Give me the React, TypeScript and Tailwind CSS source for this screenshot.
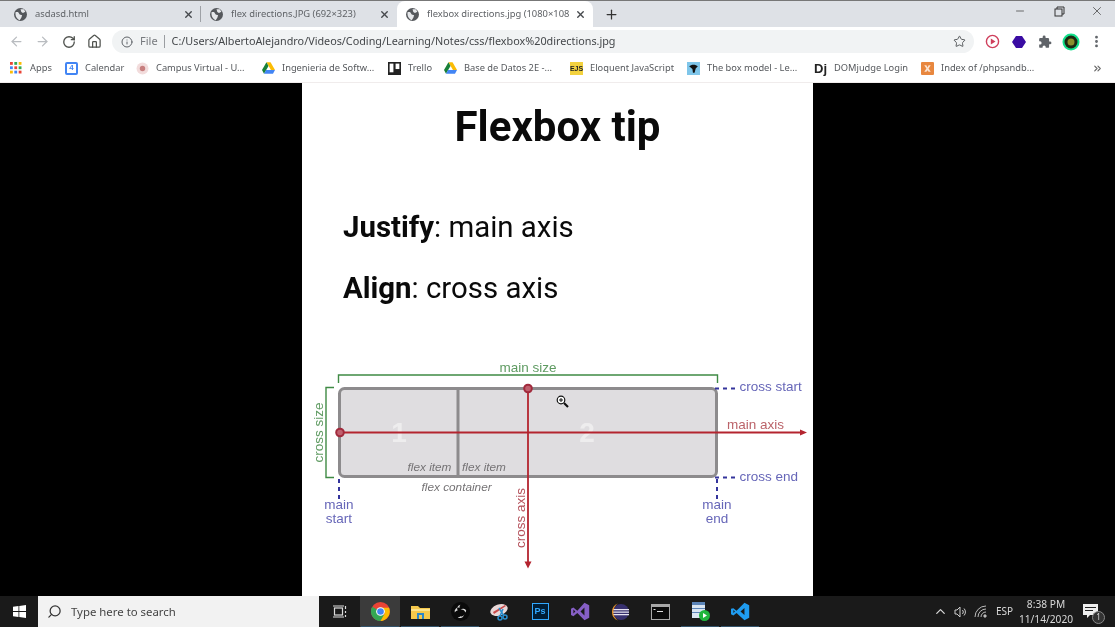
import React from "react";
import { ArrowLeft, ArrowRight, RotateCw, Home, Info, Star, X, Plus, Minus, Search, ChevronUp, MoreVertical, ChevronsRight } from "lucide-react";

const Globe = () => (
  <svg width="13" height="13" viewBox="0 0 16 16" className="shrink-0">
    <circle cx="8" cy="8" r="8" fill="#55585c" />
    <path d="M2 5l3 0 2 3 3 1-1 3-2 3C4 14 1 10 2 5zM8 1.500l4 0 2 3-3 1.500-2-1z" fill="#e6e8eb" />
  </svg>
);

const Tab = ({ title, active, sep }: { title: string; active?: boolean; sep?: boolean }) => (
  <div className={`relative flex h-[26px] w-[196px] shrink-0 items-center pl-[9px] ${active ? "rounded-t-lg bg-white" : ""}`}>
    <Globe />
    <span className="ml-[8px] whitespace-nowrap text-[9.4px] text-[#5f6266]">{title}</span>
    <X size={11} strokeWidth={3} className="ml-auto mr-[7px] text-[#45484c]" />
    {sep && <span className="absolute right-0 top-[5px] h-[16px] w-px bg-[#9ea1a6]" />}
  </div>
);

const Drive = () => (
  <svg width="13" height="12" viewBox="0 0 16 14"><path d="M5.500 0h5L16 9.500h-5z" fill="#fbbc04" /><path d="M5.500 0L0 9.500 2.500 14 8 4.500z" fill="#188038" /><path d="M2.500 14h11L16 9.500H5z" fill="#4285f4" /></svg>
);

const bookmarks: { w: string; label: string; icon: React.ReactNode }[] = [
  {
    w: "w-[55px]", label: "Apps",
    icon: (
      <svg width="13" height="13" viewBox="0 0 12 12">
        {[1, 5, 9].map((y, i) => [1, 5, 9].map((x, j) => <rect key={`${i}${j}`} x={x - 1} y={y - 1} width="2.600" height="2.600" fill={["#ea4335", "#34a853", "#fbbc04", "#4285f4", "#ea4335", "#34a853", "#fbbc04", "#4285f4", "#ea4335"][i * 3 + j]} />))}
      </svg>
    ),
  },
  { w: "w-[71px]", label: "Calendar", icon: <span className="flex h-[13px] w-[13px] items-center justify-center rounded-[2px] border-2 border-[#4285f4] bg-white font-['Liberation_Sans'] text-[8px] font-bold text-[#4285f4]">4</span> },
  { w: "w-[126px]", label: "Campus Virtual - U...", icon: <svg width="13" height="13" viewBox="0 0 12 12"><circle cx="6" cy="6" r="5.500" fill="#f2dcdc" /><circle cx="6" cy="6" r="2.500" fill="#c77e7e" /></svg> },
  { w: "w-[126px]", label: "Ingenieria de Softw...", icon: <Drive /> },
  { w: "w-[56px]", label: "Trello", icon: <svg width="13" height="13" viewBox="0 0 12 12"><rect width="12" height="12" fill="#222" /><rect x="1.500" y="1.500" width="3.500" height="8" fill="#fff" /><rect x="7" y="1.500" width="3.500" height="5" fill="#fff" /></svg> },
  { w: "w-[126px]", label: "Base de Datos 2E -...", icon: <Drive /> },
  { w: "w-[117px]", label: "Eloquent JavaScript", icon: <span className="flex h-[13px] w-[13px] items-center justify-center bg-[#f3d23e] font-['Liberation_Sans'] text-[7px] font-bold leading-none text-[#222]">EJS</span> },
  { w: "w-[127px]", label: "The box model - Le...", icon: <svg width="13" height="13" viewBox="0 0 12 12"><rect width="12" height="12" fill="#7fc6ea" /><path d="M2 4c2-2 6-2 8 0L8 6 7 10H5.500L5 6.500z" fill="#111" /></svg> },
  { w: "w-[107px]", label: "DOMjudge Login", icon: <span className="w-[15px] font-['Liberation_Sans'] text-[13px] font-bold leading-none text-[#222]">Dj</span> },
  { w: "w-[115px]", label: "Index of /phpsandb...", icon: <svg width="13" height="13" viewBox="0 0 12 12"><rect width="12" height="12" rx="1" fill="#e8873f" /><path d="M3 3h2l1 2 1-2h2L7 6l2 3H7L6 7.500 5 9H3l2-3z" fill="#fbe4d2" /></svg> },
];

const TaskBtn = ({ children, active, run }: { children: React.ReactNode; active?: boolean; run?: boolean }) => (
  <div className={`relative flex h-full w-[40px] shrink-0 items-center justify-center ${active ? "bg-[#3b3b3b]" : ""}`}>
    {children}
    {run && <span className="absolute inset-x-[1px] bottom-0 h-[1px] bg-[#33536b]" />}
  </div>
);

const Diagram = () => (
  <svg viewBox="302 355 511 241" className="block h-[241px] w-[511px] shrink-0 font-['Liberation_Sans']">
    <path d="M338.500 383v-8h379v8" fill="none" stroke="#3f8a44" strokeWidth="1.400" />
    <path d="M334 387.500h-8v90h8" fill="none" stroke="#3f8a44" strokeWidth="1.400" />
    <rect x="339.500" y="388.500" width="377" height="88" rx="5" fill="#dfdde0" stroke="#8d8b8d" strokeWidth="3" />
    <rect x="456.500" y="389" width="3" height="87" fill="#8d8b8d" />
    <text x="399" y="442" textAnchor="middle" fontSize="28" fontWeight="700" fill="#eeedee">1</text>
    <text x="587" y="442" textAnchor="middle" fontSize="28" fontWeight="700" fill="#eeedee">2</text>
    <line x1="340" y1="432.500" x2="801" y2="432.500" stroke="#b4242f" strokeWidth="1.800" />
    <path d="M800 429.500l7 3-7 3z" fill="#b4242f" />
    <line x1="528" y1="389" x2="528" y2="563" stroke="#b4242f" strokeWidth="1.800" />
    <path d="M524.500 561.500l3.500 7 3.500-7z" fill="#b4242f" />
    <circle cx="340" cy="432.500" r="3.800" fill="#c0606e" stroke="#a12a3c" strokeWidth="2" />
    <circle cx="528" cy="388.500" r="3.800" fill="#c0606e" stroke="#a12a3c" strokeWidth="2" />
    <path d="M715 388.500h21M715 477.500h21M339 479v20M717 479v20" fill="none" stroke="#34349c" strokeWidth="2" strokeDasharray="4 4" />
    <g fontSize="13.500">
      <text x="528" y="371.500" textAnchor="middle" fill="#5f9b62">main size</text>
      <text transform="translate(323 432.500) rotate(-90)" textAnchor="middle" fill="#5f9b62">cross size</text>
      <text x="739.500" y="391" fill="#6666b8">cross start</text>
      <text x="739.500" y="480.500" fill="#6666b8">cross end</text>
      <text x="727" y="429" fill="#bb6369">main axis</text>
      <text transform="translate(525 518) rotate(-90)" textAnchor="middle" fill="#b5525c">cross axis</text>
      <text x="339" y="509" textAnchor="middle" fill="#6666b8">main</text>
      <text x="339" y="522.500" textAnchor="middle" fill="#6666b8">start</text>
      <text x="717" y="509" textAnchor="middle" fill="#6666b8">main</text>
      <text x="717" y="522.500" textAnchor="middle" fill="#6666b8">end</text>
    </g>
    <g fontSize="11.800" fontStyle="italic" fill="#757375">
      <text x="407.500" y="471">flex item</text>
      <text x="462" y="471">flex item</text>
      <text x="421.500" y="490.500">flex container</text>
    </g>
    <g fill="none" stroke="#111">
      <circle cx="561" cy="400" r="3.800" strokeWidth="1.200" fill="#fff" />
      <path d="M564 403l4 4" strokeWidth="2.200" />
      <path d="M559 400h4M561 398v4" strokeWidth="1" />
    </g>
  </svg>
);

export default function App() {
  return (
    <div className="flex h-screen w-full flex-col overflow-hidden bg-black font-['Noto_Sans',sans-serif] blur-[0.35px]">
      {/* Tab strip */}
      <div className="flex h-[27px] shrink-0 items-end border-t border-[#777] bg-[#dee1e6] pl-[5px]">
        <Tab title="asdasd.html" sep />
        <Tab title="flex directions.JPG (692×323)" />
        <Tab title="flexbox directions.jpg (1080×108" active />
        <Plus size={15} strokeWidth={2} className="mb-[5px] ml-[11px] text-[#333]" />
        <div className="mb-[9px] ml-auto flex items-center text-[#444]">
          <Minus size={12} strokeWidth={1.500} className="mr-[28px]" />
          <svg width="11" height="11" viewBox="0 0 11 11" className="mr-[25px]" fill="none" stroke="#333" strokeWidth="1"><rect x="1" y="3" width="7" height="7" /><path d="M3 3V1h7v7H8" /></svg>
          <X size={14} strokeWidth={1.300} className="mr-[11px]" />
        </div>
      </div>
      {/* Toolbar */}
      <div className="flex h-[28px] shrink-0 items-center bg-white pl-[9px] pr-[10px] pt-[1px]">
        <ArrowLeft size={15} className="text-[#b9bcc0]" />
        <ArrowRight size={15} className="ml-[11px] text-[#b9bcc0]" />
        <RotateCw size={14} strokeWidth={2.300} className="ml-[12px] text-[#50534f]" />
        <Home size={15} strokeWidth={2} className="ml-[11px] text-[#50534f]" />
        <div className="ml-[10px] flex h-[23px] w-[862px] shrink-0 items-center rounded-full bg-[#f1f3f4] pl-[9px] pr-[7px]">
          <Info size={12} className="text-[#5f6368]" />
          <span className="ml-[7px] text-[11px] text-[#777a7e]">File</span>
          <span className="ml-[6px] h-[13px] w-px bg-[#9a9da1]" />
          <span className="ml-[7px] whitespace-nowrap text-[10.8px] text-[#44474a]">C:/Users/AlbertoAlejandro/Videos/Coding/Learning/Notes/css/flexbox%20directions.jpg</span>
          <Star size={13} strokeWidth={1.800} className="ml-auto mr-[1px] text-[#55585c]" />
        </div>
        <svg width="15" height="15" viewBox="0 0 16 16" className="ml-[11px] shrink-0"><circle cx="8" cy="8" r="6.500" fill="#fff" stroke="#cf3f5c" strokeWidth="1.500" /><path d="M6.200 4.800l5 3.200-5 3.200z" fill="#cf3f5c" /></svg>
        <svg width="14" height="14" viewBox="0 0 14 14" className="ml-[12px] shrink-0"><path d="M4 1h6l4 6-4 6H4L0 7z" fill="#3a0ca3" /></svg>
        <svg width="14" height="14" viewBox="0 0 24 24" className="ml-[12px] shrink-0" fill="#5f6368"><path d="M20.500 11H19V7a2 2 0 0 0-2-2h-4V3.500a2.500 2.500 0 0 0-5 0V5H4a2 2 0 0 0-2 2v3.800h1.500a2.700 2.700 0 0 1 0 5.400H2V20a2 2 0 0 0 2 2h3.800v-1.500a2.700 2.700 0 0 1 5.400 0V22H17a2 2 0 0 0 2-2v-4h1.500a2.500 2.500 0 0 0 0-5z" /></svg>
        <svg width="18" height="18" viewBox="0 0 18 18" className="ml-[10px] shrink-0"><circle cx="9" cy="9" r="8.500" fill="#11e08a" /><circle cx="9" cy="9" r="6.500" fill="#1c2a12" /><circle cx="9" cy="9" r="3.500" fill="#8a8f2c" /></svg>
        <MoreVertical size={15} strokeWidth={2.500} className="ml-[9px] shrink-0 text-[#5f6368]" />
      </div>
      {/* Bookmarks */}
      <div className="flex h-[28px] shrink-0 items-center border-b border-[#f0ecec] bg-white pb-[1px] pl-[10px]">
        {bookmarks.map((b) => (
          <div key={b.label} className={`flex shrink-0 items-center gap-[7px] ${b.w}`}>
            <span className="flex w-[13px] shrink-0 items-center justify-center">{b.icon}</span>
            <span className="whitespace-nowrap text-[9.3px] text-[#55585c]">{b.label}</span>
          </div>
        ))}
        <ChevronsRight size={11} strokeWidth={2.500} className="ml-auto mr-[12px] text-[#666]" />
      </div>
      {/* Viewer */}
      <div className="flex min-h-0 flex-1 justify-center bg-black">
        <div className="flex h-full w-[511px] flex-col bg-white font-['Roboto',sans-serif] text-[#0a0a0a]">
          <h1 className="mt-[19px] text-center text-[42px] font-bold leading-[50px]">Flexbox tip</h1>
          <p className="mt-[57px] pl-[41px] text-[29.400px] leading-[36px]"><b>Justify</b>: main axis</p>
          <p className="mt-[25px] pl-[41px] text-[29.400px] leading-[36px]"><b>Align</b>: cross axis</p>
          <div className="mt-auto"><Diagram /></div>
        </div>
      </div>
      {/* Taskbar */}
      <div className="flex h-[31px] shrink-0 items-center bg-[#1a1a1a]">
        <div className="flex h-full w-[38px] items-center justify-center">
          <svg width="13" height="13" viewBox="0 0 13 13" fill="#fff"><path d="M0 1.800L5.500 1v5H0zM6.300.9L13 0v6H6.300zM0 7h5.500v5L0 11.200zM6.300 7H13v6l-6.700-.9z" /></svg>
        </div>
        <div className="flex h-full w-[281px] items-center bg-[#f2f2f2] pl-[9px]">
          <Search size={15} className="-scale-x-100 text-[#333]" />
          <span className="ml-[9px] text-[11.400px] text-[#444]">Type here to search</span>
        </div>
        <div className="flex h-full w-[41px] items-center justify-center">
          <svg width="14" height="13" viewBox="0 0 14 13" fill="none" stroke="#ddd" strokeWidth="1.200"><rect x="1.500" y="3" width="8" height="7" /><path d="M0 1h11M0 12h11M12.500 1v3M12.500 6v2M12.500 10v2" /></svg>
        </div>
        <TaskBtn active run>
          <svg width="19" height="19" viewBox="0 0 20 20"><circle cx="10" cy="10" r="10" fill="#ea4335" /><path d="M10 10L1.300 5A10 10 0 0 0 10 20l4-6z" fill="#34a853" /><path d="M10 6h8.900A10 10 0 0 1 10 20l4.500-8z" fill="#fbbc04" /><circle cx="10" cy="10" r="4.600" fill="#fff" /><circle cx="10" cy="10" r="3.500" fill="#4285f4" /></svg>
        </TaskBtn>
        <TaskBtn run>
          <svg width="19" height="16" viewBox="0 0 19 16"><path d="M0 2h7l2 2h10v11H0z" fill="#f5c84c" /><path d="M0 5h19v2H0z" fill="#fde28a" /><rect x="6" y="9" width="7" height="6" fill="#2c87c9" /><rect x="8" y="11" width="3" height="4" fill="#f5c84c" /></svg>
        </TaskBtn>
        <TaskBtn run>
          <svg width="19" height="19" viewBox="0 0 20 20"><circle cx="10" cy="10" r="10" fill="#0a0a0a" /><path d="M10 3a4 4 0 0 0-3 6 4 4 0 0 0-3 2 4 4 0 0 1 5-5 3 3 0 0 1 1-3zM16 9a4 4 0 0 0-6-1 4 4 0 0 1 5 3 3 3 0 0 0 1-2zM7 16a4 4 0 0 0 6-1 4 4 0 0 0 1-3 3 3 0 0 1-4 3 3 3 0 0 1-3 1z" fill="#ddd" /></svg>
        </TaskBtn>
        <TaskBtn>
          <svg width="20" height="20" viewBox="0 0 20 20"><ellipse cx="9" cy="8" rx="9" ry="5.500" transform="rotate(-20 9 8)" fill="#e8d8d8" /><path d="M3 10l12-7 1 1L4 12z" fill="#c84a4a" /><path d="M9 6l5 8M13 7l-3 7" stroke="#2a8fd0" strokeWidth="1.500" /><circle cx="10" cy="16" r="2" fill="none" stroke="#2a8fd0" strokeWidth="1.500" /><circle cx="15" cy="15" r="2" fill="none" stroke="#2a8fd0" strokeWidth="1.500" /></svg>
        </TaskBtn>
        <TaskBtn>
          <span className="flex h-[17px] w-[17px] items-center justify-center border border-[#31a8ff] bg-[#001e36] font-['Liberation_Sans'] text-[9px] font-bold text-[#31a8ff]">Ps</span>
        </TaskBtn>
        <TaskBtn>
          <svg width="19" height="19" viewBox="0 0 24 24"><path d="M17 1l6 3v16l-6 3-9-9-5 4-3-1.500V8.500L3 7l5 4zM3 9.500v5l2.500-2.500zM17 7l-5 5 5 5z" fill="#865fc5" /></svg>
        </TaskBtn>
        <TaskBtn>
          <svg width="20" height="20" viewBox="0 0 20 20"><circle cx="11" cy="10" r="8" fill="#37306e" /><path d="M3 7h16v1.300H3zM3 9.500h16v1.300H3zM3 12h16v1.300H3z" fill="#e6e3f0" /><path d="M8 1.500a9 9 0 0 0 0 17 10 10 0 0 1 0-17z" fill="#e8952c" /></svg>
        </TaskBtn>
        <TaskBtn>
          <svg width="19" height="16" viewBox="0 0 19 16"><rect width="19" height="16" fill="#a8a8a8" /><rect x="1" y="3" width="17" height="12" fill="#0a0a0a" /><path d="M2.500 5h2v1h-2zM6 7h6v1H6z" fill="#ddd" /></svg>
        </TaskBtn>
        <TaskBtn run>
          <svg width="19" height="19" viewBox="0 0 19 19"><rect x="1" y="0" width="13" height="16" fill="#d9e5f2" /><path d="M1 0h13v3H1zM1 6h13v1H1zM1 10h13v1H1z" fill="#5b84b8" /><circle cx="13.500" cy="13.500" r="5.500" fill="#20b53c" /><path d="M12 11l4 2.500-4 2.500z" fill="#fff" /></svg>
        </TaskBtn>
        <TaskBtn run>
          <svg width="19" height="19" viewBox="0 0 24 24"><path d="M17 1l6 3v16l-6 3-10-9-4 3-3-1.500V8.500L3 8l4 3zM3 10v4l2-2zM17 7.500L12 12l5 4.500z" fill="#1f9cf0" /></svg>
        </TaskBtn>
        <div className="ml-auto flex h-full items-center text-[#d8d8d8]">
          <ChevronUp size={15} />
          <svg width="14" height="14" viewBox="0 0 14 14" className="ml-[6px]" fill="none" stroke="#ccc" strokeWidth="1"><path d="M1 5h2l3-3v10L3 9H1zM8.500 5a3 3 0 0 1 0 4M10 3.500a5 5 0 0 1 0 7" /></svg>
          <svg width="14" height="14" viewBox="0 0 14 14" className="ml-[6px]" fill="none" stroke="#bbb" strokeWidth="1"><path d="M1 12a11 11 0 0 1 11-11M4 12a8 8 0 0 1 8-8M7 12a5 5 0 0 1 5-5" /><circle cx="11" cy="11" r="1.200" fill="#bbb" /></svg>
          <span className="ml-[8px] text-[10px]">ESP</span>
          <div className="ml-[8px] flex w-[50px] flex-col items-center text-[10.200px] leading-[15px]">
            <span>8:38 PM</span>
            <span>11/14/2020</span>
          </div>
          <div className="relative ml-[12px] mr-[17px] h-[20px] w-[15px]">
            <svg width="15" height="14" viewBox="0 0 15 14" className="mt-[2px]" fill="#eee"><path d="M0 0h15v11H7l-3 3v-3H0z" /><path d="M2 3h11v1H2zM2 6h8v1H2z" fill="#222" /></svg>
            <span className="absolute -bottom-[2px] -right-[7px] flex h-[13px] w-[13px] items-center justify-center rounded-full border border-[#888] bg-[#333] text-[8px] leading-none">1</span>
          </div>
        </div>
      </div>
    </div>
  );
}
